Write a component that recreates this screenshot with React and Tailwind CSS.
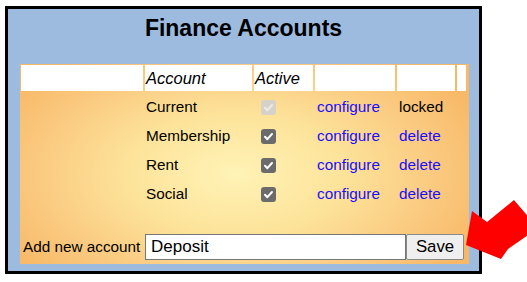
import React from "react";

function Check({ disabled }) {
  return (
    <div
      className={
        "w-[15px] h-[15px] rounded-[3px] flex items-center justify-center " +
        (disabled ? "bg-[#d6d2ca]" : "bg-[#6b6b6b]")
      }
    >
      <svg width="11" height="11" viewBox="0 0 11 11">
        <path
          d="M2 5.8 L4.4 8.2 L9 3"
          fill="none"
          stroke={disabled ? "#eeebe5" : "#ffffff"}
          strokeWidth="2"
          strokeLinecap="round"
          strokeLinejoin="round"
        />
      </svg>
    </div>
  );
}

const rows = [
  { name: "Current", disabled: true, action: "locked" },
  { name: "Membership", action: "delete" },
  { name: "Rent", action: "delete" },
  { name: "Social", action: "delete" },
];

const cols = "grid grid-cols-[122px_107px_59px_80px_58px_9px] gap-x-[2px]";

export default function App() {
  return (
    <div
      className="relative w-[527px] h-[282px] bg-white overflow-hidden"
      style={{ fontFamily: '"Liberation Sans", Arial, sans-serif' }}
    >
      <div className="ml-[5px] pt-[6px]">
        <div className="w-[477px] h-[268px] border-[3px] border-black bg-[#9dbadf]">
          <div className="h-[55px] pt-[6px] text-center text-[23px] leading-[26px] font-bold text-black">
            Finance Accounts
          </div>
          <div
            className="ml-[12px] w-[449px] h-[200px] pt-[1px] pl-[1px] text-black"
            style={{
              background:
                "radial-gradient(ellipse 60% 75% at 48% 55%, #fff3b6 0%, #fde39a 40%, #fac97f 75%, #f8b866 100%)",
            }}
          >
            <div className={cols + " h-[26px]"}>
              <div className="bg-white" />
              <div className="bg-white italic text-[16.5px] leading-[26px] pl-[1px]">Account</div>
              <div className="bg-white italic text-[16.5px] leading-[26px] pl-[1px]">Active</div>
              <div className="bg-white" />
              <div className="bg-white" />
              <div className="bg-white" />
            </div>
            <div className="mt-[2px]">
              {rows.map((r) => (
                <div key={r.name} className={cols + " h-[29px] items-center text-[15.3px]"}>
                  <div />
                  <div className="pl-[1px]">{r.name}</div>
                  <div className="pl-[7px]">
                    <Check disabled={r.disabled} />
                  </div>
                  <div className="pl-[2px] text-[#1a0dff]">configure</div>
                  <div className={"pl-[2px] " + (r.action === "locked" ? "text-black" : "text-[#1a0dff]")}>
                    {r.action}
                  </div>
                  <div />
                </div>
              ))}
            </div>
            <div className="mt-[25px] flex items-center h-[26px]">
              <div className="w-[124px] pl-[2px] text-[15.3px] whitespace-nowrap">Add new account</div>
              <div className="w-[261px] h-[26px] border border-[#767676] bg-white flex items-center pl-[5px] text-[17px]">
                Deposit
              </div>
              <div className="w-[58px] h-[26px] border border-[#8a8a8a] rounded-[2px] bg-[#efefef] flex items-center justify-center text-[16.8px]">
                Save
              </div>
            </div>
          </div>
        </div>
      </div>
      <svg
        className="absolute left-0 top-0 pointer-events-none"
        width="527"
        height="282"
        viewBox="0 0 527 282"
      >
        <polygon
          points="466,245 472,211 487,222 514,200 538,228 508,249 501,259"
          fill="#ff0000"
        />
      </svg>
    </div>
  );
}
